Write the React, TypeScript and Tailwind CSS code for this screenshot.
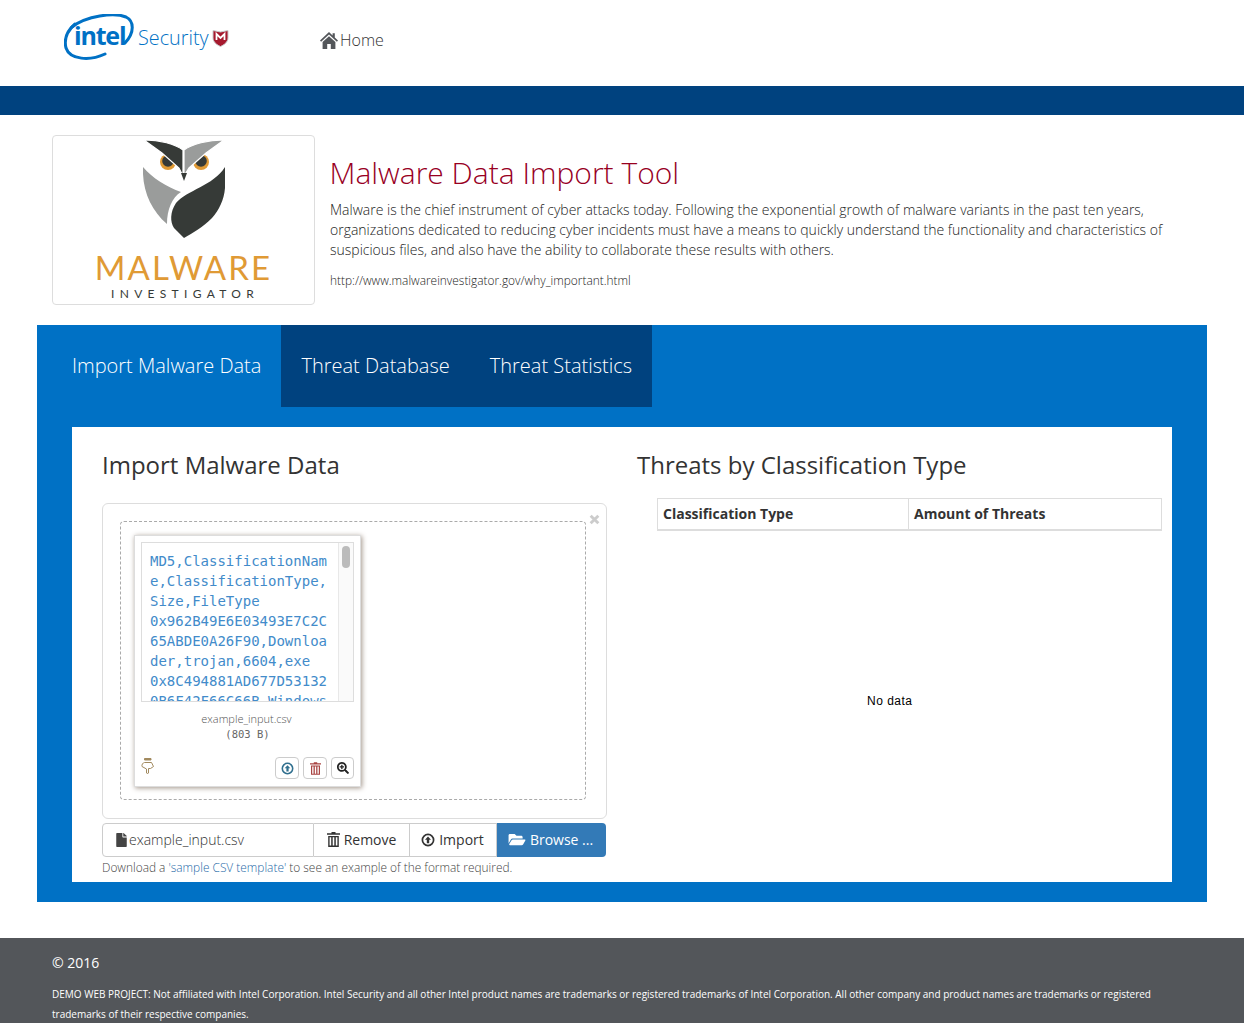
import { FaFile, FaFolderOpen, FaSearchPlus } from "react-icons/fa";

const fileLines = ["MD5,ClassificationNam", "e,ClassificationType,", "Size,FileType", "0x962B49E6E03493E7C2C", "65ABDE0A26F90,Downloa", "der,trojan,6604,exe", "0x8C494881AD677D53132", "0B6F42F66C66B,Windows"];

function UploadCircle({ className }: { className?: string }) {
  return (
    <svg className={className} viewBox="0 0 14 14" fill="none">
      <circle cx="7" cy="7" r="5.6" stroke="currentColor" strokeWidth="1.7" />
      <path d="M7 3.6 10 6.8H8.2V10.2H5.8V6.8H4Z" fill="currentColor" />
    </svg>
  );
}

function TrashIcon({ className }: { className?: string }) {
  return (
    <svg className={className} viewBox="0 0 13 15" fill="currentColor">
      <path d="M4.5 0H8.5V1.2H13V2.8H0V1.2H4.5Z" />
      <path d="M1.2 4H11.8V15H1.2ZM2.6 5.2V13.6H4.2V5.2ZM5.7 5.2V13.6H7.3V5.2ZM8.8 5.2V13.6H10.4V5.2Z" fillRule="evenodd" />
    </svg>
  );
}

function HomeIcon() {
  return (
    <svg className="w-[18px] h-[17px] text-[#53565a]" viewBox="0 0 18 17" fill="currentColor">
      <path d="M9 0 12.6 3.4V1.2H14.8V5.5L18 8.6 16.9 9.7 9 2.6 1.1 9.7 0 8.6Z" />
      <path d="M9 4.2 15.4 9.9V17H10.8V12H7.2V17H2.6V9.9Z" />
    </svg>
  );
}

function HandDown() {
  return (
    <svg className="w-[13px] h-[16px] text-[#a28a5f]" viewBox="0 0 13 16" fill="none" stroke="currentColor" strokeWidth="1">
      <path d="M3.5 0.5H10V2H3.5Z" fill="currentColor" />
      <path d="M3.5 4.5H10.5L12.5 8.5 9.5 10.5H7.5V15C7.5 15.6 5.5 15.6 5.5 15V11L1 8.5C0.4 7 2 4.5 3.5 4.5Z" />
    </svg>
  );
}

function IntelLogo() {
  return (
    <div className="relative w-[170px] h-[50px] text-[#0071c5]">
      <svg className="absolute left-0 top-[1px]" width="72" height="50" viewBox="0 0 72 50" fill="none">
        <path d="M11 10C3 17 0 26 2 34c4 12 24 13 39 6" stroke="#0071c5" strokeWidth="3" strokeLinecap="round" />
        <path d="M8 13C22 2 50-2 62 3c8 4 9 15-1 26" stroke="#0071c5" strokeWidth="3" strokeLinecap="round" />
      </svg>
      <span className="absolute left-[10px] top-[4px] text-[25px] leading-[36px] font-bold tracking-[-1.2px]">intel</span>
      <span className="absolute left-[74px] top-[11px] text-[19.8px] leading-[28px] font-light">Security</span>
      <svg className="absolute left-[148px] top-[16px]" width="17" height="18" viewBox="0 0 17 18">
        <path d="M1 1.5 8.5 3 16 1.5V9c0 4-4 7-7.5 8.5C5 16 1 13 1 9Z" fill="#a6192e" stroke="#c9ccce" />
        <path d="M4.5 11V5L8.5 9 12.5 5V11" fill="none" stroke="#fff" strokeWidth="1.8" />
      </svg>
    </div>
  );
}

function OwlLogo() {
  return (
    <svg width="82" height="98" viewBox="0 0 82 98">
      <circle cx="25" cy="22" r="8" fill="#e09a35" />
      <circle cx="58" cy="22" r="8" fill="#e09a35" />
      <circle cx="25" cy="21" r="5.8" fill="#363a37" />
      <circle cx="58" cy="21" r="5.8" fill="#363a37" />
      <path d="M1 0C17 0 32 4 40 10V36L36 28 19 13Z" fill="#363a37" stroke="#fff" strokeWidth="1.2" />
      <path d="M81 0C65 0 49 4 41 10V36L46 28 63 13Z" fill="#9a9c9b" stroke="#fff" strokeWidth="1.2" />
      <path d="M38 33H44L41 41Z" fill="#363a37" />
      <path d="M0 27C9 38 24 47 38 52 29 57 24 70 24 84 8 70-1 50 0 27Z" fill="#9a9c9b" />
      <path d="M82 27V48C81 60 76 70 69 78 60 87 50 93 41 98L31 88C27 82 27 72 33 63 44 50 70 46 82 27Z" fill="#363a37" />
    </svg>
  );
}

export default function App() {
  return (
    <div className="font-['Open_Sans',sans-serif] text-[#333] bg-white w-full overflow-hidden">
      <nav className="h-[86px] flex items-start pl-[64px] pt-[13px]">
        <IntelLogo />
        <a className="ml-[86px] mt-[15px] flex items-center gap-[2px] text-[16px] leading-[24px] font-light text-[#333]">
          <HomeIcon />
          Home
        </a>
      </nav>
      <div className="h-[29px] bg-[#00427f]" />

      <section className="flex px-[52px] pt-[20px] pb-[20px]">
        <div className="w-[263px] h-[170px] shrink-0 border border-[#ddd] rounded flex flex-col items-center pt-[4px]">
          <OwlLogo />
          <div className="text-[33px] leading-[36px] mt-[11px] text-[#e09a35] tracking-[2.1px] font-['Lato',sans-serif]">MALWARE</div>
          <div className="ml-[3px] text-[12px] leading-[18px] tracking-[5.3px] text-[#363a37] font-['Lato',sans-serif]">INVESTIGATOR</div>
        </div>
        <div className="ml-[15px] flex-1 pt-[18px]">
          <h1 className="text-[30px] leading-[40px] font-light text-[#98001f] -ml-[0.5px]">Malware Data Import Tool</h1>
          <p className="text-[14px] leading-[20px] font-light mt-[7px] w-[840px] text-[#222]">
            Malware is the chief instrument of cyber attacks today. Following the exponential growth of malware variants in the past ten years, organizations dedicated to reducing cyber incidents must have a means to quickly understand the functionality and characteristics of suspicious files, and also have the ability to collaborate these results with others.
          </p>
          <p className="text-[11.9px] leading-[18px] font-light mt-[11px] text-[#222]">http://www.malwareinvestigator.gov/why_important.html</p>
        </div>
      </section>

      <main className="mx-[37px] bg-[#0071c5] px-[35px] pb-[20px]">
        <div className="flex h-[82px] text-white text-[20px]">
          <a className="h-full flex items-center pr-[20px] font-light">Import Malware Data</a>
          <div className="flex h-full bg-[#00427f] font-light">
            <a className="flex items-center px-[20px]">Threat Database</a>
            <a className="flex items-center px-[20px]">Threat Statistics</a>
          </div>
        </div>

        <div className="mt-[20px] h-[455px] bg-white flex">
          <div className="w-[535px] shrink-0 pl-[30px]">
            <h2 className="text-[24px] leading-[32px] mt-[22px]">Import Malware Data</h2>
            <div className="relative mt-[22px] w-[505px] h-[316px] border border-[#ddd] rounded-md pl-[17px] pr-[20px] py-[17px]">
              <svg className="absolute right-[6px] top-[10px]" width="11" height="11" viewBox="0 0 10 10">
                <path d="M1.5 1.5 8.5 8.5M8.5 1.5 1.5 8.5" stroke="#ccc" strokeWidth="2.6" />
              </svg>
              <div className="h-[279px] border border-dashed border-[#aaa] rounded p-[13px]">
                <div className="w-[227px] h-[252px] bg-white border border-[#ddd] shadow-[1px_1px_5px_0_#a2958a] p-[6px] flex flex-col">
                  <div className="relative h-[160px] border border-[#ddd] overflow-hidden shrink-0">
                    <div className="pt-[8px] pl-[8px] w-[190px] text-[14px] leading-[20px] text-[#428bca] font-['DejaVu_Sans_Mono',monospace]">
                      {fileLines.map((line) => (
                        <div key={line} className="whitespace-nowrap">{line}</div>
                      ))}
                    </div>
                    <div className="absolute right-0 top-0 bottom-0 w-[15px] bg-[#fafafa] border-l border-[#e8e8e8]">
                      <div className="mx-auto mt-[3px] w-[8px] h-[22px] rounded bg-[#bbb]" />
                    </div>
                  </div>
                  <div className="mt-[9px] -ml-[2px] text-center text-[11px] leading-[15px] font-light text-[#555]">example_input.csv</div>
                  <div className="mt-px text-center text-[10.5px] leading-[15px] text-[#666] font-['DejaVu_Sans_Mono',monospace]">(803 B)</div>
                  <div className="flex items-end justify-between mt-auto">
                    <div className="mb-[6px]"><HandDown /></div>
                    <div className="flex gap-[4px] mb-px">
                      <button className="w-[24px] h-[22px] border border-[#ccc] rounded flex items-center justify-center"><UploadCircle className="w-[13px] h-[13px] text-[#31708f]" /></button>
                      <button className="w-[24px] h-[22px] border border-[#ccc] rounded flex items-center justify-center"><TrashIcon className="w-[11px] h-[13px] text-[#a94442]" /></button>
                      <button className="w-[23px] h-[22px] border border-[#ccc] rounded flex items-center justify-center"><FaSearchPlus className="w-[12px] h-[12px] text-[#222]" /></button>
                    </div>
                  </div>
                </div>
              </div>
            </div>
            <div className="mt-[4px] w-[504px] h-[34px] flex text-[14px] leading-[20px] text-[#333]">
              <div className="w-[212px] pb-px border border-[#ccc] rounded-l flex items-center gap-[2px] pl-[13px] font-light">
                <FaFile className="w-[11px] h-[14px] text-[#444]" />example_input.csv
              </div>
              <div className="w-[96px] pb-px border-y border-r border-[#ccc] flex items-center justify-center gap-[4px]">
                <TrashIcon className="w-[13px] h-[15px]" />Remove
              </div>
              <div className="w-[87px] pb-px border-y border-r border-[#ccc] flex items-center justify-center gap-[4px] pr-px">
                <UploadCircle className="w-[14px] h-[14px]" />Import
              </div>
              <div className="flex-1 pb-px pr-[2px] bg-[#337ab7] rounded-r text-white font-medium flex items-center justify-center gap-[4px]">
                <FaFolderOpen className="w-[18px] h-[15px]" />Browse ...
              </div>
            </div>
            <p className="text-[11.9px] leading-[17px] mt-[2px] font-light text-[#444]">
              Download a <a className="text-[#1f6aa8]">'sample CSV template'</a> to see an example of the format required.
            </p>
          </div>

          <div className="flex-1 flex flex-col">
            <h2 className="text-[24px] leading-[32px] mt-[22px] ml-[30px]">Threats by Classification Type</h2>
            <div className="ml-[50px] mr-[10px] mt-[17px] h-[33px] flex border border-[#ddd] border-b-2 text-[14px] font-bold leading-[30px]">
              <div className="w-[251px] pl-[5px] border-r border-[#ddd]">Classification Type</div>
              <div className="pl-[5px]">Amount of Threats</div>
            </div>
            <div className="ml-[260px] mt-[162px] text-[12px] leading-[16px] tracking-[0.5px] text-black font-['Liberation_Sans',sans-serif]">No data</div>
          </div>
        </div>
      </main>

      <footer className="mt-[36px] h-[85px] bg-[#53565a] text-white px-[52px] pt-[15px] overflow-hidden">
        <div className="text-[14px] leading-[20px]">© 2016</div>
        <p className="mt-[11px] text-[10px] leading-[20px] font-medium">
          DEMO WEB PROJECT: Not affiliated with Intel Corporation. Intel Security and all other Intel product names are trademarks or registered trademarks of Intel Corporation. All other company and product names are trademarks or registered trademarks of their respective companies.
        </p>
      </footer>
    </div>
  );
}
